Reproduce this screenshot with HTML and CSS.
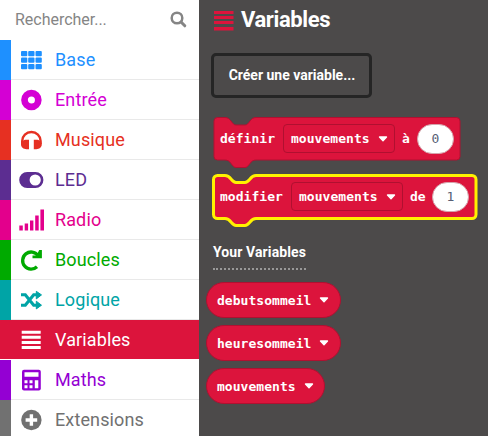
FILE: index.html
```html
<!DOCTYPE html>
<html lang="fr">
<head>
<meta charset="utf-8">
<title>Variables</title>
<link rel="stylesheet" href="styles.css">
</head>
<body>
<div class="app">
<nav class="toolbox">
  <div class="search"><span class="search-text">Rechercher...</span>
    <svg class="search-icon" width="17" height="17" viewBox="0 0 17 17"><circle cx="7" cy="7" r="5.3" fill="none" stroke="currentColor" stroke-width="2.5"/><path d="M11 11l3.8 3.8" stroke="currentColor" stroke-width="3" stroke-linecap="round"/></svg>
  </div>
  <div class="row base"><svg class="icon" viewBox="0 0 24 24"><g fill="currentColor"><rect x="1" y="3" width="6.3" height="5.2" rx="1"/><rect x="8.2" y="3" width="6.3" height="5.2" rx="1"/><rect x="15.500" y="3" width="6.3" height="5.2" rx="1"/><rect x="1" y="9.5" width="6.3" height="5.2" rx="1"/><rect x="8.2" y="9.5" width="6.3" height="5.2" rx="1"/><rect x="15.500" y="9.5" width="6.3" height="5.2" rx="1"/><rect x="1" y="16" width="6.3" height="5.2" rx="1"/><rect x="8.2" y="16" width="6.3" height="5.2" rx="1"/><rect x="15.500" y="16" width="6.3" height="5.2" rx="1"/></g></svg><span>Base</span></div>
  <div class="row input"><svg class="icon" viewBox="0 0 24 24"><circle cx="11.4" cy="12" r="6.9" fill="none" stroke="currentColor" stroke-width="6.7"/></svg><span>Entrée</span></div>
  <div class="row music"><svg class="icon" viewBox="0 0 24 24"><path d="M2.200 16v-3a9.200 9 0 0 1 18.400 0v3" fill="none" stroke="currentColor" stroke-width="2.400"/><path d="M9 11.800v9.400H6.500C3.500 21.200 1 19.200 1 16.500s2.500-4.700 5.500-4.700zM13.800 11.800v9.400h2.500c3 0 5.500-2 5.500-4.700s-2.500-4.700-5.500-4.700z" fill="currentColor"/></svg><span>Musique</span></div>
  <div class="row led"><svg class="icon" viewBox="0 0 24 24"><path fill="currentColor" fill-rule="evenodd" d="M7.200 4h8.200a8 8 0 0 1 0 16H7.200a8 8 0 0 1 0-16zM15.200 6.400a5.600 5.600 0 1 0 0 11.200a5.600 5.600 0 0 0 0-11.200z"/></svg><span>LED</span></div>
  <div class="row radio"><svg class="icon" viewBox="0 0 24 24"><path fill="currentColor" d="M-.7 17.500h3.500v5h-3.500zM4.700 15.500h3.400v7H4.700zM10 12.500h3.400v10H10zM15.200 7.500h3.500v15h-3.500zM20.400 1.500H24v21h-3.600z"/></svg><span>Radio</span></div>
  <div class="row loops"><svg class="icon" viewBox="0 0 24 24"><path d="M18 7.500A8.500 8.500 0 1 0 17 18.700" fill="none" stroke="currentColor" stroke-width="3.300"/><path d="M21.900 1.900v8.400h-9.400V7.600h4l2.700-5.700z" fill="currentColor"/></svg><span>Boucles</span></div>
  <div class="row logic"><svg class="icon" viewBox="0 0 24 24"><path d="M1 6.800h4.300L13.700 17.300H18M1 17.300h4.300L13.700 6.800H18" fill="none" stroke="currentColor" stroke-width="3.100"/><path d="M16.300 3.300L21.500 6.900L16.300 10.900zM16.300 13.200L21.500 17.200L16.300 20.900z" fill="currentColor" stroke="currentColor" stroke-linejoin="round"/></svg><span>Logique</span></div>
  <div class="row variables"><svg class="icon" viewBox="0 0 24 24"><path fill="currentColor" d="M1.700 2.800h19v3h-19zM1.700 7.800h19v3h-19zM1.700 12.900h19v3h-19zM1.700 18h19v3h-19z"/></svg><span>Variables</span></div>
  <div class="row maths"><svg class="icon" viewBox="0 0 24 24"><rect x="2" y="1.700" width="18.800" height="20.800" rx="2" fill="currentColor"/><path fill="#fff" d="M4.500 4.200h14v4.500h-14zM4.500 12.200h3v3h-3zM9.500 12.200h3v3h-3zM4.500 17.200h3v3h-3zM9.500 17.200h3v3h-3zM14.800 12.200h3.500v8h-3.500z"/></svg><span>Maths</span></div>
  <div class="row extensions"><svg class="icon" viewBox="0 0 24 24"><circle cx="11.400" cy="12" r="10.200" fill="currentColor"/><path d="M5.600 12H17.200M11.400 6.200v11.600" stroke="#fff" stroke-width="3.400"/></svg><span>Extensions</span></div>
</nav>
<main class="flyout">
  <h1 class="heading"><svg width="20" height="21" viewBox="0 0 20 21"><path fill="#dc143c" d="M0 1h19.500v3H0zM0 6h19.500v3H0zM0 11h19.500v3H0zM0 17h19.500v3.500H0z"/></svg><span>Variables</span></h1>
  <div class="create"><span>Créer une variable...</span></div>

  <div class="block set">
    <svg class="shape" width="248" height="54"><path fill="#dc143c" stroke="#b01030" d="M4.500.5H12C15 .5 16.500 2 18 4C20 6.500 21 8 23 8H32C34 8 35 6.500 37 4C38.500 2 40 .5 43 .5H243.500a3.500 3.500 0 0 1 3.500 3.500V39.500a3.500 3.500 0 0 1-3.500 3.500H43C40 43 38.500 44.500 37 46.500C35 49 34 50.500 32 50.500H23C21 50.500 20 49 18 46.500C16.500 44.500 15 43 12 43H4.500a3.500 3.500 0 0 1-3.500-3.500V4A3.500 3.500 0 0 1 4.500.5z"/></svg>
    <span class="word verb">définir</span>
    <span class="field"><span>mouvements</span><svg class="arrow" viewBox="0 0 10 6"><path d="M1.500 1h7L5 4.700z"/></svg></span>
    <span class="word prep">à</span><span class="number">0</span>
  </div>
  <div class="block change">
    <svg class="shape" width="268" height="54"><path fill="#dc143c" stroke="#fff200" stroke-width="3" d="M4.500 1.500H12C15 1.500 16.500 3 18 5C20 7.500 21 8.500 23 8.500H32C34 8.500 35 7.500 37 5C38.500 3 40 1.500 43 1.500H259a4 4 0 0 1 4 4V40.500a4 4 0 0 1-4 4H43C40 44.500 38.500 46 37 48C35 50.500 34 51.500 32 51.500H23C21 51.500 20 50.500 18 48C16.500 46 15 44.500 12 44.500H4.500a4 4 0 0 1-4-4V5.500A4 4 0 0 1 4.500 1.500z"/></svg>
    <span class="word verb">modifier</span>
    <span class="field"><span>mouvements</span><svg class="arrow" viewBox="0 0 10 6"><path d="M1.500 1h7L5 4.700z"/></svg></span>
    <span class="word prep">de</span><span class="number">1</span>
  </div>

  <h2 class="label">Your Variables</h2>
  <div class="pills">
    <div class="pill"><span>debutsommeil</span><svg class="arrow" viewBox="0 0 10 6"><path d="M1.500 1h7L5 4.700z"/></svg></div>
    <div class="pill"><span>heuresommeil</span><svg class="arrow" viewBox="0 0 10 6"><path d="M1.500 1h7L5 4.700z"/></svg></div>
    <div class="pill short"><span>mouvements</span><svg class="arrow" viewBox="0 0 10 6"><path d="M1.500 1h7L5 4.700z"/></svg></div>
  </div>
</main>
</div>
</body>
</html>
```
FILE: styles.css
```css
* { box-sizing: border-box; }
body { margin: 0; font-family: Roboto, sans-serif; background: #4c4a4a; }
.app { display: flex; width: 488px; height: 436px; overflow: hidden; }
.toolbox { width: 199px; flex: none; background: #fff; }
.search { height: 40px; display: flex; align-items: center; justify-content: space-between; padding: 0 12px 1px 15px; color: #858585; }
.search-text { font-size: 16px; letter-spacing: -.02px; white-space: nowrap; }
.row { height: 40px; display: flex; align-items: center; font-size: 18px; letter-spacing: .12px; border-left: 11px solid currentColor; padding-left: 9px; background: linear-gradient(#e9e9e9, #e9e9e9) left bottom / 100% 1px no-repeat; }
.row span { padding-bottom: 2px; }
.icon { width: 24px; height: 24px; margin-right: 11px; overflow: visible; flex: none; }
.base { color: #1e90ff; }
.input { color: #d400d4; }
.music { color: #e63022; }
.led { color: #5c2d91; }
.radio { color: #e3008c; }
.loops { color: #00aa00; }
.logic { color: #00a4a6; }
.variables { color: #fff; background: #dc143c; border-left-color: #dc143c; height: 39px; margin-bottom: 1px; }
.row.variables span { padding-bottom: 0; }
.maths { color: #9400d3; }
.extensions { color: #717171; }

.flyout { flex: 1; padding-left: 14px; background: #4c4a4a; color: #fff; }
.heading { margin: 0; height: 53px; padding: 10px 0 0 1px; display: flex; align-items: flex-start; gap: 7px; font-size: 22px; line-height: 20px; font-weight: 700; letter-spacing: -.4px; }
.create { width: 161px; height: 45px; margin-left: -2px; border: 3px solid #252525; border-radius: 5px; display: flex; align-items: center; justify-content: center; font-size: 14px; font-weight: 700; white-space: nowrap; }
.create span { padding: 0 0 1px 1px; }
.block { position: relative; height: 43px; display: flex; align-items: center; font: 700 13px "DejaVu Sans Mono", monospace; letter-spacing: .04px; }
.block > span { position: relative; }
.set { margin-top: 19px; padding-left: 7px; }
.change { margin-top: 15px; padding-left: 7px; }
.shape { position: absolute; left: 0; top: 0; overflow: visible; }
.change .shape { top: -1px; }
.set .verb { width: 63px; }
.change .verb { width: 71px; }
.field { width: 112px; height: 29px; display: flex; align-items: center; padding-left: 7px; border: 1px solid #b01030; border-radius: 4px; }
.field .arrow { margin-left: 8px; }
.arrow { width: 10px; height: 6px; fill: #fff; stroke: #fff; stroke-width: 1.400; stroke-linejoin: round; }
.prep { margin-left: 7px; }
.set .prep { width: 15px; }
.change .prep { width: 22px; }
.number { width: 37px; height: 30px; border-radius: 15px; background: #fff; color: #575e75; border: 1px solid #d4a4ac; font-weight: 400; display: flex; align-items: center; justify-content: center; }
.label { margin: 26px 0 0; width: 93px; height: 26px; border-bottom: 2px dotted #999; font-size: 14px; line-height: 17px; font-weight: 700; letter-spacing: .1px; white-space: nowrap; }
.pills { margin: 12px 0 0 -7px; display: flex; flex-direction: column; gap: 7px; }
.pill { width: 135px; height: 36px; display: flex; align-items: center; gap: 8px; padding-left: 10px; border: 1px solid #b01030; border-radius: 18px; background: #dc143c; font: 700 13px "DejaVu Sans Mono", monospace; letter-spacing: .04px; }
.short { width: 119px; }
```
